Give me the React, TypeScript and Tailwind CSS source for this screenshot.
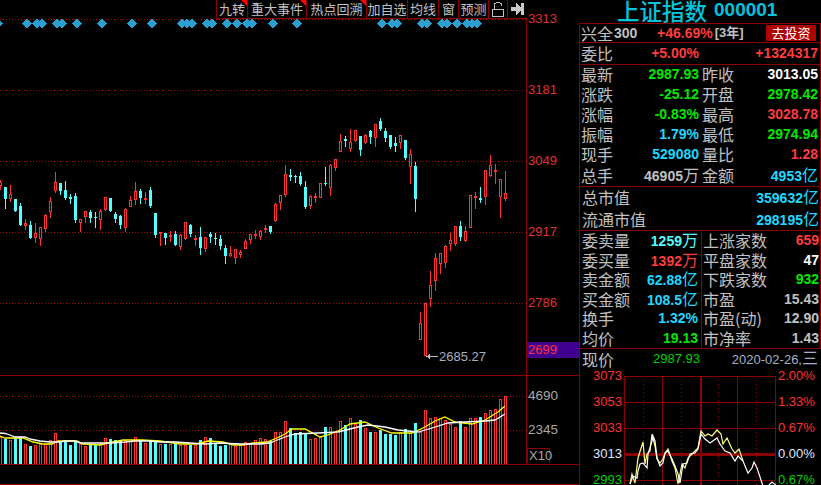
const NUM = "font-['Liberation_Sans','Noto_Sans_CJK_SC',sans-serif]";
const CJK = "font-['Noto_Sans_CJK_SC','Liberation_Sans',sans-serif]";

const RED = "#ff3232";
const CYAN = "#54ffff";
const GRID = "#8b0000";

// [color, high, bodyTop, bodyBottom, low], one candle every 5px from x=0
const candles: [string, number, number, number, number][] = [
  ["r", 180, 182, 185, 189], ["c", 187, 187, 199, 208], ["r", 185, 194, 198, 201], ["c", 199, 199, 211, 211],
  ["c", 203, 206, 225, 225], ["r", 219, 223, 225, 229], ["c", 221, 225, 238, 238], ["r", 223, 233, 237, 242],
  ["r", 227, 227, 238, 245], ["r", 214, 215, 228, 231], ["r", 197, 201, 211, 217], ["r", 172, 182, 190, 192],
  ["c", 183, 183, 191, 194], ["c", 181, 190, 198, 199], ["c", 194, 197, 199, 203], ["c", 193, 196, 220, 222],
  ["r", 219, 219, 222, 231], ["r", 211, 211, 216, 222], ["c", 210, 212, 218, 222], ["c", 212, 217, 218, 227],
  ["r", 209, 211, 219, 229], ["r", 197, 197, 209, 210], ["c", 198, 198, 211, 211], ["c", 212, 214, 219, 222],
  ["c", 215, 216, 225, 228], ["r", 208, 209, 227, 231], ["r", 196, 200, 206, 206], ["r", 182, 191, 199, 204],
  ["c", 189, 191, 198, 203], ["r", 192, 198, 199, 203], ["c", 187, 190, 206, 207], ["c", 213, 213, 235, 237],
  ["r", 232, 232, 233, 245], ["c", 233, 233, 238, 244], ["r", 231, 235, 236, 241], ["c", 231, 234, 245, 245],
  ["r", 234, 235, 246, 249], ["r", 222, 222, 238, 239], ["c", 224, 225, 234, 236], ["r", 235, 238, 239, 245],
  ["c", 227, 237, 248, 254], ["r", 237, 237, 248, 251], ["c", 232, 234, 237, 242], ["c", 233, 238, 239, 244],
  ["c", 235, 239, 246, 249], ["c", 245, 248, 256, 263], ["r", 246, 253, 255, 256], ["r", 249, 249, 257, 263],
  ["r", 250, 252, 254, 257], ["r", 239, 241, 248, 248], ["r", 234, 234, 239, 243], ["r", 230, 234, 235, 238],
  ["r", 230, 231, 236, 239], ["r", 225, 228, 229, 232], ["c", 226, 226, 232, 233], ["r", 203, 204, 220, 221],
  ["r", 195, 195, 202, 209], ["r", 165, 174, 194, 196], ["c", 169, 175, 177, 180], ["c", 175, 176, 177, 182],
  ["c", 172, 176, 184, 185], ["c", 181, 187, 207, 208], ["r", 195, 196, 205, 208], ["r", 193, 196, 197, 202],
  ["r", 183, 183, 197, 197], ["c", 167, 183, 184, 185], ["r", 164, 165, 187, 195], ["r", 159, 159, 167, 170],
  ["r", 134, 141, 151, 151], ["c", 136, 139, 141, 146], ["r", 129, 142, 148, 151], ["r", 130, 130, 140, 141],
  ["c", 136, 136, 150, 155], ["r", 134, 135, 142, 143], ["c", 130, 131, 137, 143], ["r", 124, 124, 137, 146],
  ["c", 118, 121, 129, 130], ["c", 128, 131, 138, 141], ["c", 135, 135, 147, 148], ["c", 137, 143, 146, 151],
  ["r", 135, 135, 142, 148], ["c", 140, 140, 158, 159], ["r", 149, 154, 166, 183], ["c", 162, 166, 199, 211],
  ["r", 312, 323, 339, 339], ["r", 303, 303, 355, 355], ["r", 271, 285, 298, 306], ["r", 253, 258, 280, 290],
  ["r", 253, 253, 263, 273], ["r", 245, 246, 262, 267], ["r", 233, 240, 243, 250], ["r", 226, 226, 243, 245],
  ["c", 221, 226, 237, 240], ["r", 226, 231, 240, 241], ["r", 195, 195, 227, 227], ["r", 192, 196, 197, 208],
  ["c", 187, 198, 200, 202], ["r", 170, 170, 196, 204], ["r", 155, 165, 175, 176], ["r", 164, 170, 171, 183],
  ["r", 179, 179, 196, 217], ["r", 171, 193, 198, 200],
];

const volumes = [
  437, 439, 440, 438, 437, 444, 446, 445, 444, 444, 440, 433, 441, 441, 445, 441, 444, 446, 445, 445, 443, 438, 439, 440, 441, 440, 441, 437, 440, 443,
  441, 441, 444, 444, 444, 444, 445, 445, 445, 445, 440, 437, 438, 444, 446, 445, 444, 446, 445, 442, 444, 440, 438, 439, 441, 432, 432, 421, 428, 433,
  432, 433, 439, 438, 437, 427, 427, 432, 421, 425, 418, 424, 420, 428, 432, 432, 430, 434, 434, 435, 432, 429, 433, 423, 432, 410, 418, 417, 418, 420,
  424, 427, 421, 427, 418, 418, 417, 413, 410, 409, 399, 396,
];

const diamonds = [-3, 26, 36, 41, 56, 61, 76, 101, 131, 151, 181, 186, 191, 206, 211, 226, 236, 246, 251, 272, 296, 381, 391, 396, 421, 426, 441, 446, 456, 466, 471, 476];

const whiteMa =
  "0,433 5,433.5 10,435 15,437 25,437 30,439 40,441 50,442 60,442 65,441 75,441 80,443 100,443 110,443 125,442 135,441 150,441 160,442 175,442 190,443 205,444 220,443 240,444 260,444 270,443 275,441 280,439 285,437 295,434 318,433 338,432 358,427 368,425 385,427 398,430 418,432 432,428 448,423 465,422 485,421 495,420 505,414";
const yellowMa =
  "0,436 5,438 13,438 23,438 33,442 43,444 52,444 58,441 77,441 83,444 100,445 108,443 123,440 142,440 160,441 180,444 197,444 208,441 223,442 233,445 243,445 253,443 267,442 277,438 285,434 292,429 305,429 320,437 328,435 340,430 350,424 365,422 378,428 392,433 412,433 425,427 435,421 445,417 455,422 472,424 485,420 498,412 505,406";

const miniWhite =
  "630,483 633,475 637,477 638,470 640,463 643,462 647,467 648,453 652,440 653,435 655,440 657,457 660,465 663,462 665,452 668,450 672,458 675,465 678,473 680,482 683,463 687,462 690,453 695,452 698,448 701,433 705,438 710,442 717,437 720,443 725,450 730,452 735,460 738,455 743,460 748,472 752,467 754,461 757,467 762,482 763,485 768,485 772,481 777,485";
const miniYellow =
  "630,483 632,473 635,482 638,457 643,441 645,463 647,453 650,450 652,433 655,445 657,458 660,462 663,458 665,452 668,448 672,460 675,467 678,483 682,463 685,467 688,457 695,450 698,447 701,430 705,435 708,433 712,435 717,429 721,433 723,443 727,437 732,448 735,452 739,448 743,460";

function CandleChart() {
  return (
    <svg width={526} height={375} viewBox="0 0 526 375" className="block" shapeRendering="crispEdges">
      {[19, 90, 161, 232, 303].map((y) => (
        <line key={y} x1={0} x2={526} y1={y + 0.5} y2={y + 0.5} stroke="#b00000" strokeDasharray="1 2" />
      ))}
      {diamonds.map((x) => (
        <polygon key={x} points={`${x - 4.5},23.5 ${x + 0.5},18.5 ${x + 5.5},23.5 ${x + 0.5},28.5`} fill="#2b9fcf" />
      ))}
      {candles.map(([c, hi, top, bot, lo], i) => {
        const x = i * 5;
        const color = c === "r" ? RED : CYAN;
        return (
          <g key={i}>
            <line x1={x + 0.5} x2={x + 0.5} y1={hi} y2={lo + 1} stroke={color} />
            {c === "r" ? (
              <rect x={x - 0.5} y={top + 0.5} width={2} height={Math.max(bot - top, 1)} fill="#000" stroke={color} />
            ) : (
              <rect x={x - 1} y={top} width={3} height={Math.max(bot - top, 1)} fill={color} />
            )}
          </g>
        );
      })}
      <line x1={427} x2={438} y1={356.5} y2={356.5} stroke="#c0c0c0" />
      <polygon points="426,356.5 430,354 430,359" fill="#c0c0c0" />
    </svg>
  );
}

function VolumeChart() {
  return (
    <svg width={526} height={88} viewBox="0 376 526 88" className="block">
      {[396, 430].map((y) => (
        <line key={y} x1={0} x2={526} y1={y + 0.5} y2={y + 0.5} stroke="#b00000" strokeDasharray="1 2" shapeRendering="crispEdges" />
      ))}
      {volumes.map((top, i) => {
        const x = i * 5;
        return candles[i][0] === "r" ? (
          <rect key={i} x={x - 0.5} y={top + 0.5} width={2} height={464 - top} fill="#000" stroke={RED} shapeRendering="crispEdges" />
        ) : (
          <rect key={i} x={x - 1} y={top} width={3} height={464 - top} fill={CYAN} shapeRendering="crispEdges" />
        );
      })}
      <polyline points={yellowMa} fill="none" stroke="#ffff00" strokeWidth={1.3} />
      <polyline points={whiteMa} fill="none" stroke="#ffffff" strokeWidth={1.3} />
    </svg>
  );
}

function MiniChart() {
  return (
    <svg width={153} height={117} viewBox="623 368 153 117" className="block">
      <g shapeRendering="crispEdges">
        {[643, 681, 718, 756].map((x) => (
          <line key={x} x1={x + 0.5} x2={x + 0.5} y1={375} y2={485} stroke="#a00000" strokeDasharray="1 3" />
        ))}
        {[624, 662, 737, 775].map((x) => (
          <line key={x} x1={x + 0.5} x2={x + 0.5} y1={375} y2={485} stroke={GRID} />
        ))}
        <line x1={700.5} x2={700.5} y1={375} y2={485} stroke={GRID} strokeWidth={2} />
        {[375, 401, 427, 479].map((y) => (
          <line key={y} x1={624} x2={776} y1={y + 0.5} y2={y + 0.5} stroke={GRID} />
        ))}
        <line x1={624} x2={776} y1={453} y2={453} stroke={GRID} strokeWidth={3} />
      </g>
      <polyline points={miniYellow} fill="none" stroke="#ffff80" strokeWidth={1.2} />
      <polyline points={miniWhite} fill="none" stroke="#ffffff" strokeWidth={1.2} />
    </svg>
  );
}

const toolbarItems: { label: string; w: string; flag?: boolean }[] = [
  { label: "九转", w: "w-[31px]", flag: true },
  { label: "重大事件", w: "w-[59px]", flag: true },
  { label: "热点回溯", w: "w-[60px]", flag: true },
  { label: "加自选", w: "w-[41px]" },
  { label: "均线", w: "w-[31px]" },
  { label: "窗", w: "w-[20px]" },
  { label: "预测", w: "w-[30px]" },
];

function Toolbar() {
  return (
    <div className={`absolute left-[216px] top-0 flex h-[19px] border-b border-l border-[#8b0000] text-[13px] leading-[18px] text-[#c0c0c0] ${CJK}`}>
      {toolbarItems.map((t) => (
        <div key={t.label} className={`relative flex items-center justify-center border-r border-[#8b0000] bg-black ${t.w}`}>
          {t.label}
          {t.flag && <span className="absolute right-0 top-0 h-[6px] w-[6px] bg-[#ff0000] [clip-path:polygon(0_0,100%_0,100%_100%)]" />}
        </div>
      ))}
      <div className="flex w-[19px] items-center justify-center border-r border-[#8b0000] bg-black">
        <svg width={12} height={15} viewBox="0 0 12 15" shapeRendering="crispEdges">
          <path d="M2.5 7V3Q2.5 .5 6 .5T9.5 3V4" fill="none" stroke="#c0c0c0" />
          <rect x={0.5} y={7.5} width={11} height={7} fill="none" stroke="#c0c0c0" />
        </svg>
      </div>
      <div className="flex w-[19px] items-center justify-center bg-black">
        <svg width={13} height={12} viewBox="0 0 13 12" shapeRendering="crispEdges">
          <rect x={0} y={4} width={5} height={4} fill="#c8c8c8" />
          <polygon points="5,0 11,6 5,12" fill="#c8c8c8" />
          <rect x={10} y={0} width={3} height={12} fill="#c8c8c8" />
        </svg>
      </div>
    </div>
  );
}

function PriceAxis() {
  const cls = "h-[71px] leading-[22px]";
  return (
    <div className={`w-[52px] pt-[8px] pl-[1px] text-[13px] text-[#e03030] ${NUM}`}>
      <div className={cls}>3313</div>
      <div className={cls}>3181</div>
      <div className={cls}>3049</div>
      <div className={cls}>2917</div>
      <div className="h-[22px] leading-[22px]">2786</div>
      <div className="-ml-[1px] mt-[28px] h-[16px] bg-[#400090] pl-[1px] leading-[16px] text-[#ff3232]">2699</div>
    </div>
  );
}

function Val({ v, unit, color, cls = "" }: { v: string; unit?: string; color: string; cls?: string }) {
  return (
    <span className={`text-[14px] font-bold whitespace-nowrap ${color} ${NUM} ${cls}`}>
      {v}
      {unit && <span className={`text-[16px] font-normal ${CJK}`}>{unit}</span>}
    </span>
  );
}

const GREEN = "text-[#00e800]";
const REDT = "text-[#ff3c3c]";
const SKY = "text-[#20d8ff]";
const AQUA = "text-[#50ffff]";
const GRAY = "text-[#c0c0c0]";
const WHITE = "text-white";

const quoteRows: [string, string, string, string, string, string, string, string][] = [
  ["最新", "2987.93", "", GREEN, "昨收", "3013.05", "", WHITE],
  ["涨跌", "-25.12", "", GREEN, "开盘", "2978.42", "", GREEN],
  ["涨幅", "-0.83%", "", GREEN, "最高", "3028.78", "", REDT],
  ["振幅", "1.79%", "", SKY, "最低", "2974.94", "", GREEN],
  ["现手", "529080", "", SKY, "量比", "1.28", "", REDT],
  ["总手", "46905", "万", GRAY, "金额", "4953", "亿", SKY],
];

const leftRows: [string, string, string, string][] = [
  ["委卖量", "1259", "万", AQUA],
  ["委买量", "1392", "万", REDT],
  ["卖金额", "62.88", "亿", SKY],
  ["买金额", "108.5", "亿", SKY],
  ["换手", "1.32%", "", SKY],
  ["均价", "19.13", "", GREEN],
];

const rightRows: [string, string, string][] = [
  ["上涨家数", "659", REDT],
  ["平盘家数", "47", WHITE],
  ["下跌家数", "932", GREEN],
  ["市盈", "15.43", GRAY],
  ["市盈(动)", "12.90", GRAY],
  ["市净率", "1.43", GRAY],
];

function Sidebar() {
  return (
    <div className={`flex w-[242px] flex-col text-[16px] leading-[18px] text-[#c0c0c0] ${CJK}`}>
      <div className="flex h-[23px] items-center gap-[7px] pb-[3px] pl-[38px] text-[#00c4dc]">
        <span className="text-[22.5px] font-medium leading-[20px]">上证指数</span>
        <span className={`text-[19px] font-bold leading-[20px] ${NUM}`}>000001</span>
      </div>
      <div className="border border-[#8b0000]">
        <div className="flex h-[18px] items-center pl-[1px] pr-[4px]">
          <span className="w-[33px]">兴全</span>
          <span className={`w-[43px] text-[14px] font-bold ${NUM}`}>300</span>
          <Val v="+46.69%" color={REDT} />
          <span className={`ml-[2px] text-[13px] font-bold ${NUM}`}>[3年]</span>
          <span className="ml-auto flex h-[16px] w-[50px] items-center justify-center bg-[#b00000] text-[13px] text-white">去投资</span>
        </div>
        <div className="flex h-[22px] items-center border-t border-[#8b0000] pb-[2px] pl-[1px] pr-[2px]">
          <span className="w-[40px]">委比</span>
          <Val v="+5.00%" color={REDT} cls="w-[78px] text-right" />
          <Val v="+1324317" color={REDT} cls="ml-auto" />
        </div>
        <div className="grid grid-cols-[121px_1fr] grid-rows-[repeat(6,20.1px)] border-t border-[#8b0000] pl-[1px] pr-[2px]">
          {quoteRows.flatMap(([a, v1, u1, c1, b, v2, u2, c2]) => [
            <div key={a} className="flex items-center justify-between pb-[2px] pr-[3px]">
              <span>{a}</span>
              <Val v={v1} unit={u1} color={c1} />
            </div>,
            <div key={b} className="flex items-center justify-between pb-[2px]">
              <span>{b}</span>
              <Val v={v2} unit={u2} color={c2} />
            </div>,
          ])}
        </div>
        <div className="border-t border-[#8b0000] pl-[2px] pr-[1px]">
          <div className="flex h-[22px] items-center justify-between pb-[2px]">
            <span>总市值</span>
            <Val v="359632" unit="亿" color={SKY} />
          </div>
          <div className="flex h-[21px] items-center justify-between">
            <span>流通市值</span>
            <Val v="298195" unit="亿" color={SKY} />
          </div>
        </div>
        <div className="flex h-[118px] border-t border-[#8b0000]">
          <div className="grid w-[122px] grid-rows-6 border-r border-[#8b0000] pl-[2px] pr-[3px]">
            {leftRows.map(([l, v, u, c]) => (
              <div key={l} className="flex items-center justify-between">
                <span>{l}</span>
                <Val v={v} unit={u} color={c} />
              </div>
            ))}
          </div>
          <div className="grid flex-1 grid-rows-6 px-[1px]">
            {rightRows.map(([l, v, c]) => (
              <div key={l} className="flex items-center justify-between">
                <span>{l}</span>
                <Val v={v} color={c} />
              </div>
            ))}
          </div>
        </div>
      </div>
      <div className="flex-1 border-l border-[#8b0000]">
        <div className="flex h-[20px] items-center pl-[2px] pr-[3px]">
          <span className="w-[71px]">现价</span>
          <span className={`text-[13px] text-[#00d000] ${NUM}`}>2987.93</span>
          <span className={`ml-auto text-[13px] text-[#a8b0c8] ${NUM}`}>
            2020-02-26,<span className={`text-[16px] ${CJK}`}>三</span>
          </span>
        </div>
        <div className={`flex text-[13px] ${NUM}`}>
          <div className="flex w-[43px] flex-col items-end gap-[13px] pr-[1px] leading-[13px]">
            <span className="h-[13px] text-[#ff3232]">3073</span>
            <span className="h-[13px] text-[#ff3232]">3053</span>
            <span className="h-[13px] text-[#ff3232]">3033</span>
            <span className="h-[13px] text-[#dfe8ff]">3013</span>
            <span className="h-[13px] text-[#00d000]">2993</span>
          </div>
          <MiniChart />
          <div className="flex flex-col gap-[13px] pl-[2px] leading-[13px]">
            <span className="h-[13px] text-[#ff3232]">2.00%</span>
            <span className="h-[13px] text-[#ff3232]">1.33%</span>
            <span className="h-[13px] text-[#ff3232]">0.67%</span>
            <span className="h-[13px] text-[#dfe8ff]">0.00%</span>
            <span className="h-[13px] text-[#00d000]">0.67%</span>
          </div>
        </div>
      </div>
    </div>
  );
}

export default function App() {
  return (
    <div className="flex h-[485px] w-[821px] overflow-hidden bg-black">
      <div className="relative flex w-[579px] flex-col">
        <div className="flex h-[376px] border-b border-[#8b0000]">
          <CandleChart />
          <div className="w-px bg-[#8b0000]" />
          <PriceAxis />
        </div>
        <div className="flex h-[89px] border-b border-[#8b0000]">
          <VolumeChart />
          <div className="w-px bg-[#8b0000]" />
          <div className={`flex-1 text-[13.5px] text-[#a8a8a8] ${NUM}`}>
            <div className="mt-[12px] h-[34px] pl-[1px] leading-[16px]">4690</div>
            <div className="h-[26px] pl-[1px] leading-[16px]">2345</div>
            <div className="h-[15px] w-[23px] border border-b-0 border-[#8b0000] pl-px text-[13px] leading-[14px]">X10</div>
          </div>
        </div>
        <div className="h-[20px] border-b border-[#8b0000]" />
        <Toolbar />
        <div className={`absolute left-[439px] top-[349px] text-[13px] leading-[15px] text-[#a8b0c0] ${NUM}`}>2685.27</div>
      </div>
      <Sidebar />
    </div>
  );
}
